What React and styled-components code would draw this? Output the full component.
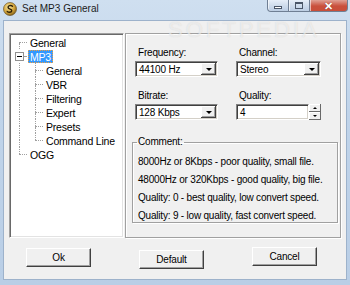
import React from 'react';
import styled, { createGlobalStyle } from 'styled-components';

const GlobalStyle = createGlobalStyle`
  html, body {
    margin: 0;
    padding: 0;
    width: 350px;
    height: 285px;
    overflow: hidden;
    background: #c4d7ec;
  }
  * {
    box-sizing: border-box;
  }
`;

const Window = styled.div`
  position: relative;
  display: flex;
  flex-direction: column;
  width: 350px;
  height: 285px;
  background: linear-gradient(to bottom, #cfdff0 0%, #c0d4ea 40%, #b9cee6 100%);
  font-family: 'Liberation Sans', Arial, sans-serif;
  font-size: 10px;
  letter-spacing: -0.2px;
  color: #000;
`;

const TitleBar = styled.div`
  display: flex;
  align-items: flex-start;
  height: 20px;
  padding-left: 3px;
  padding-right: 2px;
`;

const TitleIcon = styled.svg`
  width: 14px;
  height: 14px;
  margin-top: 2px;
  flex-shrink: 0;
`;

const TitleText = styled.span`
  margin-left: 5px;
  margin-top: 3px;
  font-size: 10px;
  letter-spacing: 0;
  color: #1b1b1b;
`;

const CaptionButtons = styled.div`
  display: flex;
  margin-left: auto;
  height: 12px;
`;

const CaptionButton = styled.div`
  display: flex;
  justify-content: center;
  align-items: center;
  width: ${({ $w }) => $w}px;
  height: 12px;
  border: 1px solid #6f7f94;
  border-top: none;
  border-left: ${({ $first }) => ($first ? '1px solid #6f7f94' : 'none')};
  border-bottom-left-radius: ${({ $first }) => ($first ? '4px' : '0')};
  border-bottom-right-radius: ${({ $last }) => ($last ? '4px' : '0')};
  background: ${({ $close }) =>
    $close
      ? 'linear-gradient(to bottom, #e0a195 0%, #c9503c 55%, #c94e3a 100%)'
      : 'linear-gradient(to bottom, #e6eef8 0%, #cfdcec 50%, #bccde3 100%)'};
  box-shadow: inset 1px 0 0 rgba(255, 255, 255, 0.6);
`;

const MinGlyph = styled.div`
  width: 8px;
  height: 3px;
  margin-top: 3px;
  border: 1px solid #4a5668;
  background: #fff;
`;

const MaxGlyph = styled.div`
  width: 8px;
  height: 7px;
  border: 1px solid #4a5668;
  border-top-width: 2px;
  background: transparent;
`;

const CloseGlyph = styled.span`
  color: #fff;
  font-size: 11px;
  font-weight: bold;
  line-height: 10px;
  letter-spacing: 0;
  text-shadow: 0 0 1px #6b1b10;
`;

const Client = styled.div`
  display: flex;
  flex-direction: column;
  flex: 1;
  margin: 0 3px 5px;
  padding: 12px 0 0 5px;
  background: #f0f0f0;
  border: 1px solid #9db2cb;
`;

const MainRow = styled.div`
  display: flex;
  height: 205px;
`;

const Tree = styled.div`
  width: 115px;
  height: 100%;
  padding: 1px 0 0 1px;
  background: #fff;
  border: 1px solid;
  border-color: #a0a0a0 #fff #fff #a0a0a0;
  box-shadow: inset 1px 1px 0 #696969, inset -1px -1px 0 #e3e3e3;
`;

const TreeRow = styled.div`
  display: flex;
  align-items: stretch;
  height: 14px;
`;

const Connector = styled.div`
  flex-shrink: 0;
  display: flex;
  flex-direction: column;
  width: 16px;
  height: 14px;
`;

const ConnHalf = styled.div`
  flex: 1;
  margin-left: 8px;
  border-left: ${({ $on }) => ($on ? '1px dotted #a0a0a0' : 'none')};
`;

const ConnMid = styled.div`
  height: 1px;
  margin-left: 8px;
  border-top: 1px dotted #a0a0a0;
`;

const Expander = styled.div`
  display: flex;
  align-items: center;
  justify-content: center;
  flex-shrink: 0;
  width: 16px;
  height: 14px;
  background:
    linear-gradient(#a0a0a0, #a0a0a0) 12px 7px / 4px 1px no-repeat;
`;

const ExpanderBox = styled.div`
  display: flex;
  align-items: center;
  justify-content: center;
  width: 9px;
  height: 9px;
  margin-top: 1px;
  border: 1px solid #919191;
  background: #fff;

  &:after {
    content: '';
    width: 5px;
    height: 1px;
    background: #000;
  }
`;

const TreeLabel = styled.span`
  display: flex;
  align-items: center;
  padding: 0 2px;
  margin: 1px 0 0 1px;
  height: 13px;
  white-space: nowrap;
  font-size: 10.5px;
  color: ${({ $selected }) => ($selected ? '#fff' : '#000')};
  background: ${({ $selected }) => ($selected ? '#3399ff' : 'transparent')};
  outline: ${({ $selected }) => ($selected ? '1px dotted #f0a040' : 'none')};
  outline-offset: -1px;
`;

const Panel = styled.div`
  display: flex;
  flex-direction: column;
  width: 216px;
  height: 100%;
  margin-left: 1px;
  padding: 12px 0 0 9px;
  border: 1px solid #a0a0a0;
  box-shadow: inset 1px 1px 0 #fff, 1px 1px 0 #fff;
`;

const FieldGrid = styled.div`
  display: grid;
  grid-template-columns: 83px 85px;
  column-gap: 18px;
  row-gap: 12px;
`;

const Field = styled.div`
  display: flex;
  flex-direction: column;
`;

const FieldLabel = styled.span`
  line-height: 13px;
  margin-left: 3px;
  margin-bottom: 2px;
`;

const Combo = styled.div`
  display: flex;
  align-items: stretch;
  height: 16px;
  background: #fff;
  border: 1px solid;
  border-color: #828282 #fff #fff #828282;
  box-shadow: inset 1px 1px 0 #404040, inset -1px -1px 0 #d4d0c8;
`;

const ComboValue = styled.span`
  flex: 1;
  display: flex;
  align-items: center;
  padding-left: 3px;
  white-space: nowrap;
`;

const DropButton = styled.div`
  display: flex;
  align-items: center;
  justify-content: center;
  width: 15px;
  margin: 1px;
  background: #f0f0f0;
  box-shadow: inset -1px -1px 0 #404040, inset 1px 1px 0 #fff, inset -2px -2px 0 #a0a0a0;
`;

const Arrow = styled.span`
  width: 0;
  height: 0;
  border-left: ${({ $size }) => $size}px solid transparent;
  border-right: ${({ $size }) => $size}px solid transparent;
  border-top: ${({ $up, $size }) => ($up ? 'none' : `${$size}px solid #000`)};
  border-bottom: ${({ $up, $size }) => ($up ? `${$size}px solid #000` : 'none')};
`;

const SpinRow = styled.div`
  display: flex;
  height: 16px;
`;

const SpinEdit = styled(Combo)`
  flex: 1;
`;

const Spinner = styled.div`
  display: flex;
  flex-direction: column;
  width: 12px;
`;

const SpinButton = styled.div`
  display: flex;
  align-items: center;
  justify-content: center;
  flex: 1;
  background: #f0f0f0;
  box-shadow: inset -1px -1px 0 #696969, inset 1px 1px 0 #fff;
`;

const CommentGroup = styled.fieldset`
  margin: 16px 0 0 -3px;
  width: 206px;
  height: 87px;
  padding: 5px 0 0 5px;
  border: 1px solid #a0a0a0;
  box-shadow: inset 1px 1px 0 #fff, 1px 1px 0 #fff;
`;

const Legend = styled.legend`
  padding: 0 1px;
  margin-left: -1px;
  line-height: 12px;
`;

const CommentLine = styled.div`
  line-height: 18px;
  white-space: nowrap;
`;

const ButtonRow = styled.div`
  display: flex;
  align-items: flex-start;
  gap: 48px;
  margin-top: 10px;
  padding-left: 17px;
`;

const Button = styled.div`
  display: flex;
  align-items: center;
  justify-content: center;
  width: 65px;
  height: 19px;
  margin-top: ${({ $drop }) => $drop || 0}px;
  background: #f0f0f0;
  border: 1px solid;
  border-color: #fff #404040 #404040 #fff;
  box-shadow: inset -1px -1px 0 #a0a0a0;
`;

const Watermark = styled.div`
  position: absolute;
  top: 17px;
  left: 168px;
  font-size: 22px;
  letter-spacing: 3px;
  color: rgba(255, 255, 255, 0.55);
  text-shadow: 0 0 1px rgba(120, 120, 120, 0.25);
  pointer-events: none;
`;

function AppIcon() {
  return (
    <TitleIcon viewBox="0 0 14 14">
      <defs>
        <radialGradient id="disc" cx="40%" cy="35%" r="70%">
          <stop offset="0%" stopColor="#f8e7a0" />
          <stop offset="60%" stopColor="#d3a43a" />
          <stop offset="100%" stopColor="#7a5a18" />
        </radialGradient>
      </defs>
      <circle cx="7" cy="7" r="6.5" fill="url(#disc)" stroke="#5a4210" strokeWidth="0.6" />
      <path d="M9.5 4.2 C8 2.8 4.6 3.6 5.2 5.8 C5.7 7.6 9.2 6.8 8.8 8.9 C8.4 10.8 5.2 10.6 4.2 9.4" fill="none" stroke="#2e2208" strokeWidth="1.4" strokeLinecap="round" />
    </TitleIcon>
  );
}

function TreeItem({ guides = [], conn, expander, selected, children }) {
  return (
    <TreeRow>
      {guides.map((v, i) => (
        <Connector key={i}>
          <ConnHalf $on={v} />
          <ConnHalf $on={v} />
        </Connector>
      ))}
      {expander ? (
        <Expander>
          <ExpanderBox />
        </Expander>
      ) : (
        <Connector>
          <ConnHalf $on={conn !== 'first'} />
          <ConnMid />
          <ConnHalf $on={conn !== 'last'} />
        </Connector>
      )}
      <TreeLabel $selected={selected}>{children}</TreeLabel>
    </TreeRow>
  );
}

function DropDown({ value }) {
  return (
    <Combo>
      <ComboValue>{value}</ComboValue>
      <DropButton>
        <Arrow $size={3.5} />
      </DropButton>
    </Combo>
  );
}

export default function App() {
  const children = ['General', 'VBR', 'Filtering', 'Expert', 'Presets', 'Command Line'];

  return (
    <>
      <GlobalStyle />
      <Window>
        <TitleBar>
          <AppIcon />
          <TitleText>Set MP3 General</TitleText>
          <CaptionButtons>
            <CaptionButton $w={22} $first>
              <MinGlyph />
            </CaptionButton>
            <CaptionButton $w={21}>
              <MaxGlyph />
            </CaptionButton>
            <CaptionButton $w={38} $close $last>
              <CloseGlyph>✕</CloseGlyph>
            </CaptionButton>
          </CaptionButtons>
        </TitleBar>

        <Client>
          <MainRow>
            <Tree>
              <TreeItem conn="first">General</TreeItem>
              <TreeItem expander selected>MP3</TreeItem>
              {children.map((c, i) => (
                <TreeItem key={c} guides={[true]} conn={i === children.length - 1 ? 'last' : 'tee'}>
                  {c}
                </TreeItem>
              ))}
              <TreeItem conn="last">OGG</TreeItem>
            </Tree>

            <Panel>
              <FieldGrid>
                <Field>
                  <FieldLabel>Frequency:</FieldLabel>
                  <DropDown value="44100 Hz" />
                </Field>
                <Field>
                  <FieldLabel>Channel:</FieldLabel>
                  <DropDown value="Stereo" />
                </Field>
                <Field>
                  <FieldLabel>Bitrate:</FieldLabel>
                  <DropDown value="128 Kbps" />
                </Field>
                <Field>
                  <FieldLabel>Quality:</FieldLabel>
                  <SpinRow>
                    <SpinEdit>
                      <ComboValue>4</ComboValue>
                    </SpinEdit>
                    <Spinner>
                      <SpinButton>
                        <Arrow $up $size={2} />
                      </SpinButton>
                      <SpinButton>
                        <Arrow $size={2} />
                      </SpinButton>
                    </Spinner>
                  </SpinRow>
                </Field>
              </FieldGrid>

              <CommentGroup>
                <Legend>Comment:</Legend>
                <CommentLine>8000Hz or 8Kbps - poor quality, small file.</CommentLine>
                <CommentLine>48000Hz or 320Kbps - good quality, big file.</CommentLine>
                <CommentLine>Quality: 0 - best quality, low convert speed.</CommentLine>
                <CommentLine>Quality: 9 - low quality, fast convert speed.</CommentLine>
              </CommentGroup>
            </Panel>
          </MainRow>

          <ButtonRow>
            <Button>Ok</Button>
            <Button $drop={2}>Default</Button>
            <Button $drop={-1}>Cancel</Button>
          </ButtonRow>
        </Client>

        <Watermark>SOFTPEDIA</Watermark>
      </Window>
    </>
  );
}
